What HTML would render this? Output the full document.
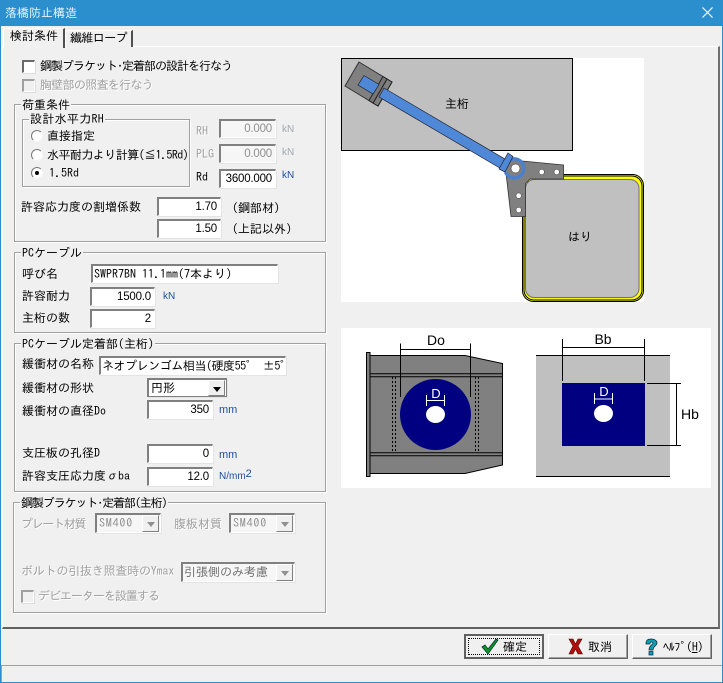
<!DOCTYPE html>
<html lang="ja"><head><meta charset="utf-8"><title>落橋防止構造</title>
<style>
html,body{margin:0;padding:0;width:723px;height:683px;overflow:hidden;background:#f0f0f0}
body{position:relative;font:12px/14px "IPAGothic","Liberation Sans","Noto Sans CJK JP",sans-serif;color:#000}
div,svg,span.a{position:absolute;box-sizing:border-box}
.t{white-space:nowrap;height:14px}
.d{color:#a0a0a0;text-shadow:1px 1px 0 #fff}
.g{border:1px solid #a0a0a0;box-shadow:1px 1px 0 #fff,inset 1px 1px 0 #fff}
.gl{background:#f0f0f0;padding:0 1px;white-space:nowrap;height:14px}
.i{background:#fff;border-style:solid;border-width:2px 1px 1px 2px;border-color:#808080 #fff #fff #808080;box-shadow:1px 1px 0 #e4e4e4;text-align:right;padding:1px 3px 0 0;line-height:15px;white-space:nowrap}
.n{font-family:"Liberation Sans",sans-serif;font-size:11.500px;letter-spacing:-.2px}
.x{background:#f6f6f6;color:#909090}
.l{text-align:left;padding-left:1px}
.cb{width:13px;height:13px;background:#fff;border:1px solid #fff;border-top:2px solid #6a6a6a;border-left:2px solid #6a6a6a;box-shadow:1px 1px 0 #ddd}
.cbd{background:#f0f0f0;border-top-color:#a0a0a0;border-left-color:#a0a0a0}
.r{width:12px;height:12px;border-radius:50%;background:#fff;border:1px solid;border-color:#777 #f6f6f6 #f6f6f6 #777}
.u{font-size:10px;color:#2050a0;white-space:nowrap;height:12px;line-height:12px;font-family:"Liberation Sans",sans-serif}
.ud{color:#a0a8b0}
.ar{right:1px;top:0;bottom:0;width:17px;background:#f0f0f0;border:1px solid;border-color:#fff #808080 #808080 #fff}
.ar:after{content:"";position:absolute;left:4px;top:6px;border:4px solid transparent;border-top:5px solid #000;border-bottom:0}
.arx:after{border-top-color:#909090}
.b{background:#f0f0f0;border:1px solid;border-color:#fff #606060 #606060 #fff;box-shadow:inset -1px -1px 0 #a0a0a0;top:634px;height:25px;width:80px}
</style></head><body>

<!-- window frame -->
<div style="left:0;top:0;width:723px;height:26px;background:#2b8fce"></div>
<div style="left:0;top:0;width:1px;height:683px;background:#2b8fce"></div>
<div style="left:722px;top:0;width:1px;height:683px;background:#2b8fce"></div>
<div style="left:0;top:682px;width:723px;height:1px;background:#2b8fce"></div>
<div class="t" style="left:5px;top:6px;color:#e6f2fb;font-size:12px">落橋防止構造</div>
<svg style="left:701px;top:6px" width="13" height="13"><path d="M1.5 1.5L11.5 11.5M11.5 1.5L1.5 11.5" stroke="#fff" stroke-width="1.2" fill="none"/></svg>

<!-- tab page -->
<div style="left:2px;top:46px;width:718px;height:583px;border:1px solid;border-color:#fff #707070 #606060 #fff;border-bottom-width:2px;border-right-width:2px"></div>
<div style="left:65px;top:30px;width:68px;height:17px;background:#f0f0f0;border:1px solid;border-color:#fff #505050 #f0f0f0 #fff;border-right-width:2px;border-bottom:0"></div>
<div class="t" style="left:70px;top:31px;letter-spacing:-.6px">繊維ロープ</div>
<div style="left:3px;top:28px;width:62px;height:20px;background:#f0f0f0;border:1px solid;border-color:#fff #505050 #f0f0f0 #fff;border-right-width:2px;border-bottom:0"></div>
<div class="t" style="left:10px;top:29px">検討条件</div>

<div class="cb" style="left:22px;top:60px"></div>
<div class="t" style="left:40px;top:59px;letter-spacing:-1px">鋼製ブラケット･定着部の設計を行なう</div>
<div class="cb cbd" style="left:22px;top:79px"></div>
<div class="t d" style="left:40px;top:78px;letter-spacing:-.7px">胸壁部の照査を行なう</div>

<!-- 荷重条件 -->
<div class="g" style="left:14px;top:104px;width:312px;height:138px"></div>
<div class="gl" style="left:21px;top:98px">荷重条件</div>
<div class="g" style="left:22px;top:119px;width:168px;height:68px"></div>
<div class="gl" style="left:29px;top:112px;letter-spacing:.3px">設計水平力RH</div>
<div class="r" style="left:31px;top:130px"></div>
<div class="t" style="left:47px;top:129px">直接指定</div>
<div class="r" style="left:31px;top:149px"></div>
<div class="t" style="left:47px;top:148px;letter-spacing:-.55px">水平耐力より計算(≦1.5Rd)</div>
<div class="r" style="left:31px;top:167px"></div>
<div style="left:35px;top:171px;width:4px;height:4px;border-radius:50%;background:#000"></div>
<div class="t" style="left:49px;top:166px">1.5Rd</div>

<div class="t d" style="left:196px;top:124px">RH</div>
<div class="t d" style="left:196px;top:147px">PLG</div>
<div class="t" style="left:196px;top:170px">Rd</div>
<div class="i x n" style="left:219px;top:119px;width:57px;height:19px">0.000</div>
<div class="i x n" style="left:219px;top:144px;width:57px;height:19px">0.000</div>
<div class="i n" style="left:219px;top:169px;width:57px;height:19px">3600.000</div>
<div class="u ud" style="left:282px;top:124px">kN</div>
<div class="u ud" style="left:282px;top:147px">kN</div>
<div class="u" style="left:282px;top:170px">kN</div>

<div class="t" style="left:21px;top:200px">許容応力度の割増係数</div>
<div class="i n" style="left:157px;top:197px;width:64px;height:19px">1.70</div>
<div class="i n" style="left:157px;top:219px;width:64px;height:19px">1.50</div>
<div class="t" style="left:226px;top:201px">（鋼部材）</div>
<div class="t" style="left:226px;top:222px">（上記以外）</div>

<!-- PCケーブル -->
<div class="g" style="left:14px;top:252px;width:312px;height:81px"></div>
<div class="gl" style="left:21px;top:246px">PCケーブル</div>
<div class="t" style="left:22px;top:267px">呼び名</div>
<div class="i l" style="left:91px;top:264px;width:187px;height:19px">SWPR7BN 11.1mm(7本より)</div>
<div class="t" style="left:22px;top:289px">許容耐力</div>
<div class="i n" style="left:90px;top:287px;width:65px;height:19px">1500.0</div>
<div class="u" style="left:163px;top:291px">kN</div>
<div class="t" style="left:22px;top:311px">主桁の数</div>
<div class="i n" style="left:90px;top:309px;width:65px;height:19px">2</div>

<!-- PCケーブル定着部 -->
<div class="g" style="left:14px;top:343px;width:312px;height:149px"></div>
<div class="gl" style="left:21px;top:337px">PCケーブル定着部(主桁)</div>
<div class="t" style="left:22px;top:357px">緩衝材の名称</div>
<div class="i l" style="left:99px;top:356px;width:187px;height:19px;letter-spacing:-.45px">ネオプレンゴム相当(硬度55° ±5°</div>
<div class="t" style="left:22px;top:381px">緩衝材の形状</div>
<div class="i l" style="left:147px;top:378px;width:80px;height:19px;padding-left:2px;border-color:#808080 #808080 #808080 #808080">円形<div class="ar"></div></div>
<div class="t" style="left:22px;top:404px">緩衝材の直径Do</div>
<div class="i n" style="left:147px;top:400px;width:66px;height:19px">350</div>
<div class="u" style="left:219px;top:404px;font-size:11px">mm</div>
<div class="t" style="left:22px;top:446px">支圧板の孔径D</div>
<div class="i n" style="left:147px;top:444px;width:66px;height:19px">0</div>
<div class="u" style="left:219px;top:449px;font-size:11px">mm</div>
<div class="t" style="left:22px;top:469px">許容支圧応力度σba</div>
<div class="i n" style="left:147px;top:467px;width:66px;height:19px">12.0</div>
<div class="u" style="left:219px;top:470px;font-size:10px">N/mm<span style="font-size:11px;position:relative;top:-2px">2</span></div>

<!-- 鋼製ブラケット -->
<div class="g" style="left:13px;top:502px;width:313px;height:111px"></div>
<div class="gl" style="left:20px;top:496px;letter-spacing:-1.1px">鋼製ブラケット･定着部(主桁)</div>
<div class="t d" style="left:21px;top:517px;letter-spacing:-1.3px">プレート材質</div>
<div class="i x l" style="left:95px;top:513px;width:66px;height:20px;letter-spacing:.8px;padding-left:2px">SM400<div class="ar arx"></div></div>
<div class="t d" style="left:174px;top:517px">腹板材質</div>
<div class="i x l" style="left:229px;top:513px;width:66px;height:20px;letter-spacing:.8px;padding-left:2px">SM400<div class="ar arx"></div></div>
<div class="t d" style="left:21px;top:564px;letter-spacing:-.2px">ボルトの引抜き照査時のYmax</div>
<div class="i x l" style="left:181px;top:562px;width:114px;height:20px;color:#707070">引張側のみ考慮<div class="ar arx"></div></div>
<div class="cb cbd" style="left:21px;top:590px"></div>
<div class="t d" style="left:38px;top:589px;letter-spacing:-1px">デビエーターを設置する</div>

<!-- upper diagram -->
<svg style="left:341px;top:58px" width="303" height="244" viewBox="341 58 303 244">
<rect x="341" y="58" width="303" height="244" fill="#fff"/>
<rect x="341.5" y="58.5" width="231" height="92" fill="#c0c0c0" stroke="#000"/>
<rect x="522.5" y="174.5" width="121" height="127" rx="11" fill="#ffff00" stroke="#000"/>
<rect x="524" y="176" width="118" height="124" rx="10" fill="none" stroke="#000"/>
<rect x="525.5" y="179.5" width="113.5" height="118" rx="9" fill="#c0c0c0" stroke="#707070"/>
<path d="M522 161L563.5 165V179H530L525.5 183.5V216.5H511L506 173Z" fill="#808080" stroke="#333" stroke-width=".8"/>
<path d="M359 62L392 82L378 106L345 86Z" fill="#808080" stroke="#333"/>
<path d="M387 79L392 82L378 106L373 103Z" fill="#808080" stroke="#222"/>
<path d="M383 76.500L387 79L373 103L369 100.500Z" fill="#777" stroke="#222"/>
<path d="M364 75.500L379 84.500L373 94L358 85Z" fill="#5088d8" stroke="#222" stroke-width=".7"/>
<path d="M384 88L510 162L505 171L379 97Z" fill="#5088d8" stroke="#223" stroke-width=".7"/>
<path d="M511 159.500A9.500 9.500 0 1 1 505.500 172" fill="#808080" stroke="#4a80cc" stroke-width="3.500" transform="rotate(0)"/>
<path d="M508 153L513 156.500L505 172L499 169Z" fill="#5088d8" stroke="#223" stroke-width=".7"/>
<circle cx="515.500" cy="168.500" r="4.500" fill="#fff" stroke="#222" stroke-width=".5"/>
<g fill="#fff" stroke="#333" stroke-width=".5"><circle cx="541.700" cy="172" r="2.700"/><circle cx="556.700" cy="172" r="2.700"/><circle cx="518.700" cy="195.700" r="2.700"/><circle cx="518.700" cy="210" r="2.700"/></g>
<text x="457" y="108" font-size="12" text-anchor="middle" font-family="IPAGothic,sans-serif">主桁</text>
<text x="580" y="241" font-size="12" text-anchor="middle" font-family="IPAGothic,sans-serif">はり</text>
</svg>

<!-- lower diagram -->
<svg style="left:341px;top:328px" width="370" height="160" viewBox="341 328 370 160">
<rect x="341" y="328" width="370" height="160" fill="#fff"/>
<path d="M370 355.500H465L502.500 363.500V465L465 473.500H370Z" fill="#808080" stroke="#000"/>
<rect x="366.500" y="352.500" width="3.500" height="124" fill="#808080" stroke="#000"/>
<path d="M370 373.700H502.500M370 376.700H502.500M370 452.700H502.500M370 455.700H502.500" stroke="#000" fill="none"/>
<path d="M392.500 377V452M395.500 377V452M475.500 377V452M478.500 377V452" stroke="#000" stroke-dasharray="2 2" fill="none"/>
<circle cx="435.500" cy="414.500" r="35.500" fill="#000080"/>
<ellipse cx="435.500" cy="414.500" rx="9.500" ry="8.500" fill="#fff"/>
<path d="M400.500 343.500V397M470.500 343.500V397M400.500 349.500H470.500" stroke="#000" fill="none"/>
<path d="M426.500 395V406M444.500 395V406M426.500 400.500H444.500" stroke="#fff" fill="none"/>
<text x="436" y="345" font-size="14" text-anchor="middle" font-family="Liberation Sans,sans-serif">Do</text>
<text x="436" y="398" font-size="13" text-anchor="middle" fill="#fff" font-family="Liberation Sans,sans-serif">D</text>
<rect x="536" y="355.500" width="134" height="121" fill="#c0c0c0"/>
<path d="M536 355.500H670M536 476.500H670" stroke="#000" fill="none"/>
<rect x="562" y="383" width="83" height="63" fill="#000080"/>
<ellipse cx="603.500" cy="413.500" rx="9.500" ry="8.500" fill="#fff"/>
<path d="M594.500 393V404M612.500 393V404M594.500 399H612.500" stroke="#fff" fill="none"/>
<text x="604" y="396" font-size="13" text-anchor="middle" fill="#fff" font-family="Liberation Sans,sans-serif">D</text>
<path d="M562.500 339V381M644.500 339V381M562.500 347.500H644.500M647 383.500H681M647 445.500H681M676.500 383.500V445.500" stroke="#000" fill="none"/>
<text x="603" y="344" font-size="14" text-anchor="middle" font-family="Liberation Sans,sans-serif">Bb</text>
<text x="690" y="419" font-size="14" text-anchor="middle" font-family="Liberation Sans,sans-serif">Hb</text>
</svg>

<!-- buttons -->
<div class="b" style="left:464px;border:2px solid #606060;box-shadow:none">
<div style="left:2px;top:2px;width:72px;height:17px;border:1px dotted #000"></div></div>
<svg style="left:481px;top:638px" width="18" height="17"><path d="M1 9L4 7L7 11L15 1L17 2L7 16Z" fill="#0a9a20" stroke="#033" stroke-width=".8"/></svg>
<div class="t" style="left:503px;top:640px">確定</div>
<div class="b" style="left:548px"></div>
<svg style="left:568px;top:638px" width="15" height="17"><path d="M1 1H5L7.500 6L10 1H14L10 8L14.500 16H10L7.500 11L5 16H1L5 8Z" fill="#b01010" stroke="#500" stroke-width=".6"/></svg>
<div class="t" style="left:588px;top:640px">取消</div>
<div class="b" style="left:632px"></div>
<svg style="left:645px;top:638px" width="13" height="18"><path d="M1 5C1 2 3 1 6 1C10 1 12 3 12 5C12 8 8 8 8 12H4C4 7 8 7 8 5C8 4 7 4 6 4C5 4 5 5 5 6H1Z" fill="#10a0b0" stroke="#024" stroke-width=".7"/><rect x="4" y="13.500" width="4" height="3.500" fill="#10a0b0" stroke="#024" stroke-width=".7"/></svg>
<div class="t" style="left:663px;top:640px;letter-spacing:-.3px">ﾍﾙﾌﾟ(<u>H</u>)</div>

<!-- status -->
<div style="left:1px;top:665px;width:721px;height:1px;background:#a0a0a0"></div>
<div style="left:1px;top:666px;width:1px;height:16px;background:#a0a0a0"></div>
</body></html>
